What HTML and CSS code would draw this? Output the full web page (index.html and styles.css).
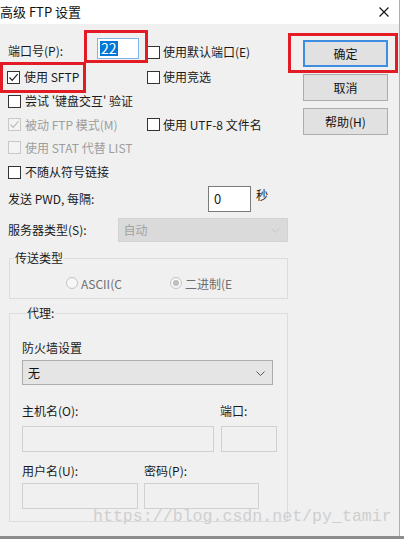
FILE: index.html
```html
<!DOCTYPE html>
<html lang="zh-CN">
<head>
    <meta charset="UTF-8">
    <title>高级 FTP 设置</title>
    <link rel="stylesheet" href="styles.css">
</head>
<body>
    <div class="screen">
        <div class="window">
            <div class="titlebar">
                <span class="title">高级 FTP 设置</span>
                <svg class="close" width="10" height="10" viewBox="0 0 10 10">
                    <path d="M0.5 0.5 L9.5 9.5 M9.5 0.5 L0.5 9.5" stroke="#111" stroke-width="1.1" fill="none"/>
                </svg>
            </div>

            <div class="dialog">
                <div class="main">
                    <div class="row row-port">
                        <span class="lbl lbl-port">端口号(P):</span>
                        <span class="field field-port"><span class="selected">22</span></span>
                        <span class="check col2"><span class="box"></span>使用默认端口(E)</span>
                    </div>
                    <div class="row row-sftp">
                        <span class="check col1 sftp">
                            <span class="box">
                                <svg width="11" height="11" viewBox="0 0 11 11"><path d="M1.5 5.5 L4.2 8.3 L9.6 2.2" stroke="#222" stroke-width="1.2" fill="none"/></svg>
                            </span>使用 SFTP
                        </span>
                        <span class="check col2"><span class="box"></span>使用竞选</span>
                    </div>
                    <div class="row">
                        <span class="check"><span class="box"></span>尝试 '键盘交互' 验证</span>
                    </div>
                    <div class="row row-short">
                        <span class="check col1 off">
                            <span class="box">
                                <svg width="11" height="11" viewBox="0 0 11 11"><path d="M1.5 5.5 L4.2 8.3 L9.6 2.2" stroke="#bdbdbd" stroke-width="1.2" fill="none"/></svg>
                            </span>被动 FTP 模式(M)
                        </span>
                        <span class="check col2"><span class="box"></span>使用 UTF-8 文件名</span>
                    </div>
                    <div class="row row-short">
                        <span class="check off"><span class="box"></span>使用 STAT 代替 LIST</span>
                    </div>
                    <div class="row row-tall">
                        <span class="check"><span class="box"></span>不随从符号链接</span>
                    </div>
                    <div class="row row-pwd">
                        <span class="lbl lbl-pwd">发送 PWD, 每隔:</span>
                        <span class="field field-pwd">0</span>
                        <span class="unit">秒</span>
                    </div>
                    <div class="row row-server">
                        <span class="lbl lbl-server">服务器类型(S):</span>
                        <span class="select select-server">自动
                            <svg class="chevron" width="9" height="5" viewBox="0 0 9 5"><path d="M0.5 0.5 L4.5 4.5 L8.5 0.5" stroke="#c4c4c4" fill="none"/></svg>
                        </span>
                    </div>

                    <fieldset class="group group-mode">
                        <legend>传送类型</legend>
                        <div class="radios">
                            <span class="radio"><span class="dot"></span><span class="radio-text">ASCII(C</span></span>
                            <span class="radio"><span class="dot on"></span><span class="radio-text">二进制(E</span></span>
                        </div>
                    </fieldset>

                    <fieldset class="group group-proxy">
                        <legend>代理:</legend>
                        <div class="plain">防火墙设置</div>
                        <div class="select select-firewall">无
                            <svg class="chevron" width="9" height="5" viewBox="0 0 9 5"><path d="M0.5 0.5 L4.5 4.5 L8.5 0.5" stroke="#555" fill="none"/></svg>
                        </div>
                        <div class="pair pair-host labels">
                            <span>主机名(O):</span>
                            <span>端口:</span>
                        </div>
                        <div class="pair pair-host inputs">
                            <span class="field off"></span>
                            <span class="field off"></span>
                        </div>
                        <div class="pair pair-user labels">
                            <span>用户名(U):</span>
                            <span>密码(P):</span>
                        </div>
                        <div class="pair pair-user inputs inputs-user">
                            <span class="field off"></span>
                            <span class="field off"></span>
                        </div>
                    </fieldset>
                </div>

                <div class="buttons">
                    <button class="btn default">确定</button>
                    <button class="btn">取消</button>
                    <button class="btn">帮助(H)</button>
                </div>

                <!-- rote Markierungen aus dem Screenshot -->
                <span class="mark mark-port"></span>
                <span class="mark mark-sftp"></span>
                <span class="mark mark-ok"></span>
            </div>
        </div>
        <div class="shade"></div>
        <div class="watermark">https://blog.csdn.net/py_tamir</div>
    </div>
</body>
</html>
```

FILE: styles.css
```css
body {
    margin: 0;
    background: #fff;
    font-family: "Noto Sans CJK SC", "Noto Sans", sans-serif;
    font-size: 12px;
    color: #1a1a1a;
}
.screen {
    position: relative;
    width: 404px;
    height: 539px;
    overflow: hidden;
}
.window {
    width: 399px;
    height: 536px;
    border-right: 1px solid #8fb6dc;
}
.titlebar {
    height: 24px;
    background: #fff;
    display: flex;
    align-items: center;
    justify-content: space-between;
}
.title {
    font-size: 13px;
    line-height: 24px;
    color: #111;
}
.close {
    margin-right: 10px;
}
.dialog {
    position: relative;
    height: 512px;
    background: #f0f0f0;
    display: flex;
}
.shade {
    height: 3px;
    background: #8d8d8d;
}

/* linke Spalte */
.main {
    width: 280px;
    padding: 13px 0 0 8px;
}
.row {
    display: flex;
    align-items: center;
    height: 24px;
    line-height: 16px;
}
.row-port {
    height: 22px;
}
.row-sftp {
    margin-top: 6px;
}
.row-short {
    height: 23px;
}
.row-tall {
    height: 26px;
}
.lbl-port {
    width: 89px;
    padding-top: 6px;
}
.col1 {
    width: 139px;
}
.row-port .col2 {
    margin-left: 8px;
    padding-top: 8px;
}
.check {
    display: flex;
    align-items: center;
    white-space: nowrap;
}
.sftp {
    margin-left: -1px;
    width: 140px;
}
.box {
    width: 13px;
    height: 13px;
    box-sizing: border-box;
    border: 1px solid #333;
    background: #fff;
    margin-right: 4px;
    display: flex;
    align-items: center;
    justify-content: center;
}
.col2 .box {
    margin-right: 3px;
}
.off {
    color: #9d9d9d;
}
.off .box {
    border-color: #c8c8c8;
    background: #f3f3f3;
}
.field {
    box-sizing: border-box;
    display: block;
    background: #fff;
    border: 1px solid #7a7a7a;
}
.field-port {
    width: 42px;
    height: 21px;
    border-color: #7eb4ea;
    padding: 2px 0 0 2px;
}
.selected {
    display: inline-block;
    background: #0078d7;
    color: #fff;
    font-size: 14px;
    line-height: 15px;
    padding: 0 1px;
}
.row-pwd {
    height: 26px;
    margin-top: 1px;
}
.lbl-pwd {
    width: 200px;
}
.field-pwd {
    width: 43px;
    height: 26px;
    padding-left: 5px;
    line-height: 24px;
    font-size: 13px;
}
.unit {
    margin-left: 5px;
    margin-top: -8px;
}
.row-server {
    margin-top: 6px;
}
.lbl-server {
    width: 110px;
}
.select {
    box-sizing: border-box;
    position: relative;
    display: flex;
    align-items: center;
    padding-left: 5px;
}
.select-server {
    width: 171px;
    height: 24px;
    background: #dadada;
    border: 1px solid #d2d2d2;
    color: #a3a3a3;
}
.chevron {
    position: absolute;
    right: 7px;
    top: 50%;
    margin-top: -2px;
}

/* Gruppen */
.group {
    margin: 8px 0 0 1px;
    padding: 0;
    width: 279px;
    box-sizing: border-box;
    border: 1px solid #dcdcdc;
    min-width: 0;
}
.group legend {
    margin-left: 4px;
    padding: 0 1px;
    height: 16px;
    line-height: 16px;
}
.radios {
    display: flex;
    padding: 9px 0 7px 56px;
    height: 16px;
    align-items: center;
    color: #6e6e6e;
}
.radio {
    display: flex;
    align-items: center;
    margin-right: 42px;
}
.dot {
    width: 12px;
    height: 12px;
    box-sizing: border-box;
    border: 1px solid #c4c4c4;
    border-radius: 50%;
    background: #f7f7f7;
    margin-right: 3px;
    display: flex;
    align-items: center;
    justify-content: center;
}
.dot.on::after {
    content: "";
    width: 6px;
    height: 6px;
    border-radius: 50%;
    background: #bdbdbd;
}
.radio-text {
    width: 47px;
    white-space: nowrap;
}
.group-proxy {
    margin-top: 6px;
    padding: 0 0 12px 12px;
}
.plain {
    margin-top: 19px;
    line-height: 16px;
}
.select-firewall {
    margin-top: 4px;
    width: 251px;
    height: 25px;
    background: #e5e5e5;
    border: 1px solid #adadad;
    color: #111;
}
.pair {
    display: grid;
    line-height: 16px;
}
.pair-host {
    grid-template-columns: 192px 56px;
    column-gap: 7px;
}
.pair-user {
    grid-template-columns: 116px 115px;
    column-gap: 6px;
}
.pair-host.labels {
    margin-top: 18px;
}
.pair-host.labels span:last-child {
    margin-left: -1px;
}
.pair-user.labels {
    margin-top: 11px;
}
.inputs {
    margin-top: 7px;
}
.inputs-user {
    margin-top: 4px;
}
.inputs .field {
    height: 26px;
}
.field.off {
    background: #f0f0f0;
    border-color: #d0d0d0;
}

/* Schaltflächen */
.buttons {
    display: flex;
    flex-direction: column;
    gap: 7px;
    margin-left: 15px;
    padding-top: 16px;
}
.btn {
    width: 85px;
    height: 27px;
    box-sizing: border-box;
    background: #e1e1e1;
    border: 1px solid #adadad;
    font-family: inherit;
    font-size: 12px;
    color: #111;
    padding: 0;
}
.btn.default {
    border: 2px solid #3d8ee0;
}

/* Markierungen */
.mark {
    position: absolute;
    border: 3px solid #e31b25;
    box-sizing: border-box;
}
.mark-port {
    left: 84px;
    top: 6px;
    width: 64px;
    height: 33px;
}
.mark-sftp {
    left: 0;
    top: 38px;
    width: 86px;
    height: 31px;
}
.mark-ok {
    left: 288px;
    top: 9px;
    width: 110px;
    height: 40px;
}

.watermark {
    position: absolute;
    left: 93px;
    top: 507px;
    font-family: "Liberation Mono", monospace;
    font-size: 16.6px;
    line-height: 20px;
    color: #cfcfcf;
}
```
